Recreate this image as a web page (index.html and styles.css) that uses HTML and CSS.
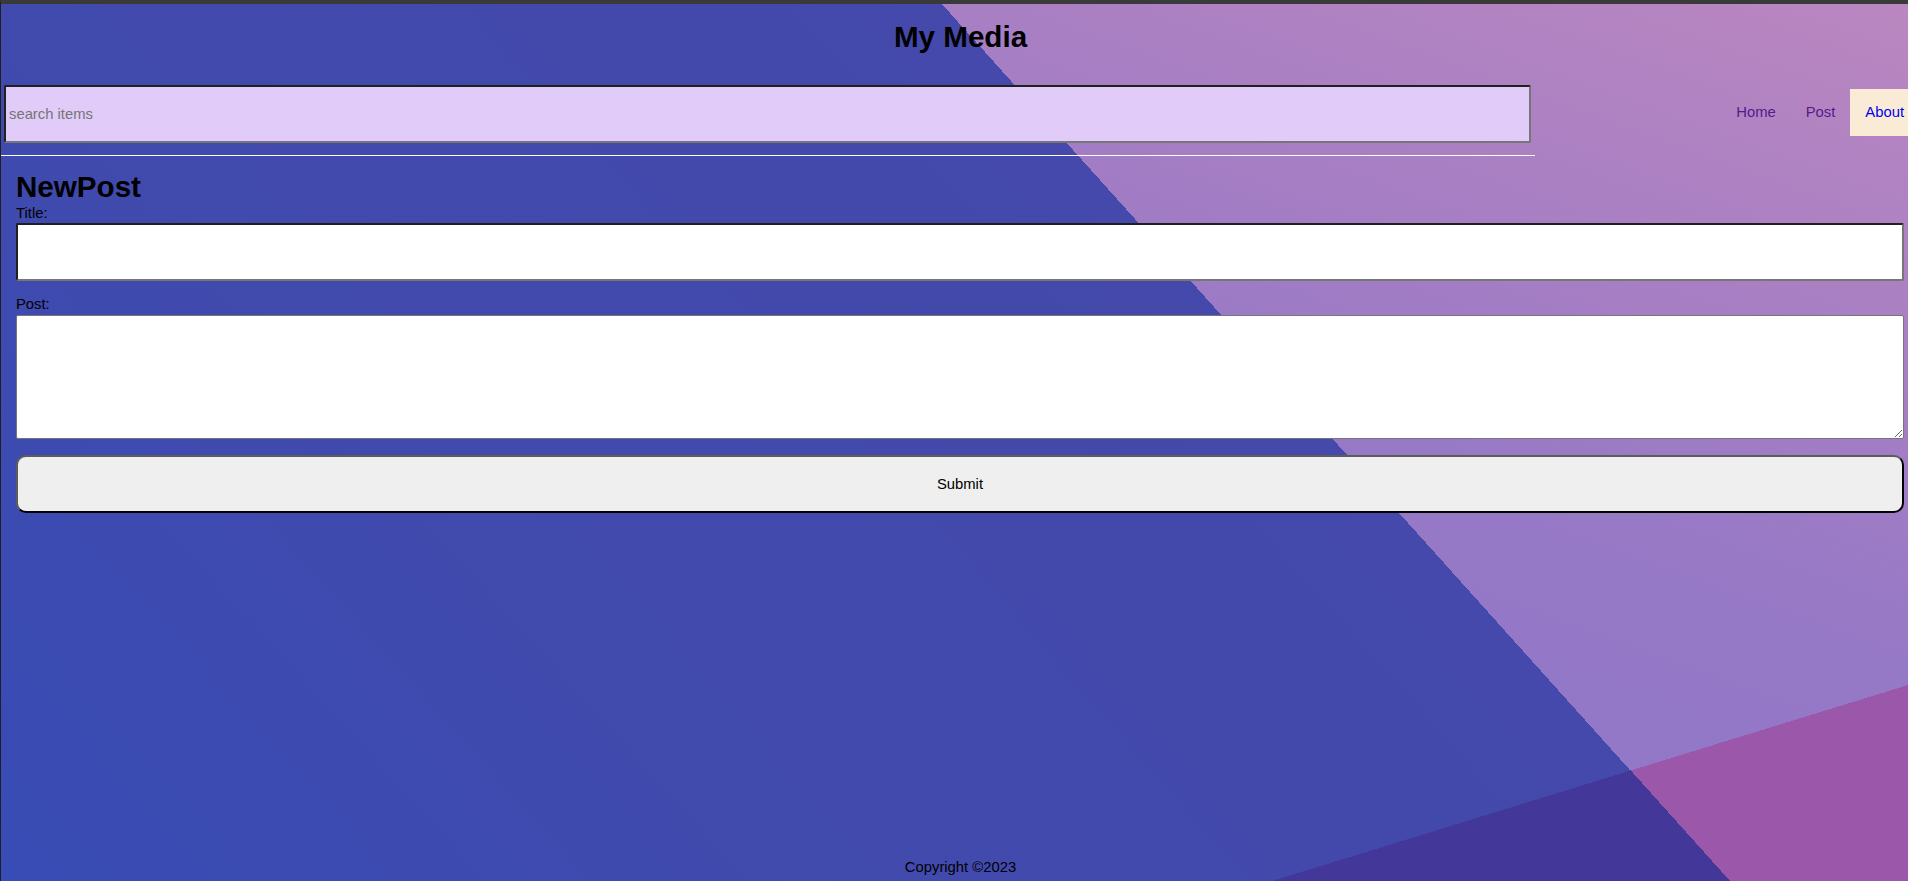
FILE: index.html
```html
<!DOCTYPE html>
<html lang="en">
<head>
<meta charset="utf-8">
<title>My Media</title>
<link rel="stylesheet" href="styles.css">
</head>
<body>
<div class="page">
  <header class="site-header">
    <h1 class="brand">My Media</h1>
    <div class="toolbar">
      <div class="search-bar">
        <input class="search-input" type="text" placeholder="search items">
      </div>
      <nav class="nav">
        <a class="nav-link visited" href="#">Home</a>
        <a class="nav-link visited" href="#">Post</a>
        <a class="nav-link current" href="#">About</a>
      </nav>
    </div>
  </header>
  <main class="content">
    <h2 class="page-title">NewPost</h2>
    <form class="post-form">
      <label class="field-label" for="title">Title:</label>
      <input id="title" class="field-input" type="text">
      <label class="field-label post-label" for="post">Post:</label>
      <textarea id="post" class="field-textarea"></textarea>
      <button class="submit-btn" type="button">Submit</button>
    </form>
  </main>
  <footer class="site-footer">Copyright ©2023</footer>
</div>
</body>
</html>
```
FILE: styles.css
```css
html {
  background: #383838;
}

body {
  margin: 0;
  height: 881px;
  box-sizing: border-box;
  border-top: 4px solid #3a3a3a;
  border-left: 1px solid #1f1f1f;
  overflow: hidden;
  font-family: "Liberation Sans", Arial, sans-serif;
  font-size: 14.8px;
  color: #000;
  background:
    linear-gradient(48.07deg, #43389a 74.4px, transparent 74.4px) 1629px 766px / 100px 111px no-repeat,
    linear-gradient(162.87deg, transparent 81.6px, #9b58aa 81.6px) 1630px 681px / 277px 196px no-repeat,
    linear-gradient(162.87deg, transparent 1212.5px, #43389a 1212.5px),
    linear-gradient(48.07deg, #384cb5 0px, #414aad 588px, #4449ab 1286px, transparent 1286px),
    linear-gradient(200deg, #ba87c0 0%, #a67ec4 25%, #9779c6 40%, #9077c8 60%, #8c75c9 100%);
}

.page {
  width: 1919px;
  height: 877px;
  display: flex;
  flex-direction: column;
}

.brand {
  margin: 15.5px 0 0;
  font-size: 29.6px;
  line-height: 34px;
  font-weight: bold;
  text-align: center;
}

.toolbar {
  display: flex;
  align-items: flex-start;
  margin-top: 31.5px;
}

.search-bar {
  width: 1534px;
  box-sizing: border-box;
  padding: 0 4px 12px 3px;
  border-bottom: 1px solid #ffffff;
}

.search-input {
  display: block;
  width: 100%;
  height: 58px;
  box-sizing: border-box;
  margin: 0;
  padding: 0 3px;
  border: 2px solid;
  border-color: #202020 #767676 #767676 #202020;
  border-radius: 2px;
  background: #e1cbf8;
  font: inherit;
  color: #000;
}

.search-input::placeholder {
  color: #757575;
}

.nav {
  display: flex;
  margin-left: auto;
  margin-right: 1px;
  margin-top: 4px;
}

.nav-link {
  display: block;
  padding: 15px;
  line-height: 17px;
  text-decoration: none;
}

.nav-link.visited {
  color: #551a8b;
}

.nav-link.current {
  color: #0000ee;
  background: #faebd7;
}

.content {
  flex: 1;
  padding: 0 16px 0 15px;
}

.page-title {
  margin: 14px 0 0;
  font-size: 29.6px;
  line-height: 34px;
  font-weight: bold;
}

.post-form {
  display: flex;
  flex-direction: column;
}

.field-label {
  display: block;
  margin-top: 1px;
  line-height: 17px;
}

.post-label {
  margin-top: 15px;
}

.field-input {
  display: block;
  width: 100%;
  height: 58px;
  box-sizing: border-box;
  margin: 1px 0 0;
  padding: 0 3px;
  border: 2px solid;
  border-color: #202020 #767676 #767676 #202020;
  border-radius: 2px;
  background: #ffffff;
  font: inherit;
}

.field-textarea {
  display: block;
  width: 100%;
  height: 124px;
  box-sizing: border-box;
  margin: 1.5px 0 0;
  padding: 2px;
  border: 1px solid #767676;
  border-radius: 2px;
  background: #ffffff;
  font: inherit;
}

.submit-btn {
  display: block;
  width: 100%;
  height: 58px;
  box-sizing: border-box;
  margin: 16.5px 0 0;
  border: 2px solid;
  border-color: #5c5c5c #000000 #000000 #5c5c5c;
  border-radius: 10px;
  background: #efefef;
  font: inherit;
  color: #000;
}

.site-footer {
  text-align: center;
  line-height: 17px;
  padding-bottom: 5px;
}
```
